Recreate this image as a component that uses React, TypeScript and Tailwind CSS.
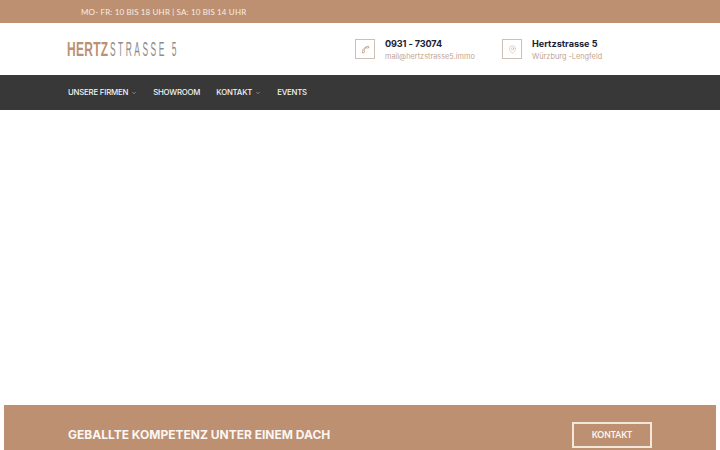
import { ChevronDown, MapPin } from 'lucide-react'

const poppins = "font-['Inter','Noto_Sans',sans-serif]"

function NavItem({ label, caret }: { label: string; caret?: boolean }) {
  return (
    <a className="flex items-center gap-[3px] text-[7.8px] font-medium tracking-[-0.2px] text-[#f4f4f4]">
      {label}
      {caret && <ChevronDown size={6} strokeWidth={1.5} className="mt-px" />}
    </a>
  )
}

function InfoBox({
  icon,
  title,
  sub,
  className,
  titleClass,
}: {
  icon: React.ReactNode
  title: string
  sub: string
  className?: string
  titleClass?: string
}) {
  return (
    <div className={`flex items-center gap-[10px] ${className ?? ''}`}>
      <div className="flex h-[20px] w-[20px] items-center justify-center border border-[#cfbfb2] text-[#bf9172]">
        {icon}
      </div>
      <div className="flex flex-col">
        <span className={`text-[9.1px] leading-[14px] font-bold text-[#1b2233] ${titleClass ?? ''}`}>{title}</span>
        <span className="text-[7.35px] leading-[11px] text-[#c2a48f]">{sub}</span>
      </div>
    </div>
  )
}

export default function App() {
  return (
    <div className={`flex h-[450px] w-[720px] flex-col overflow-hidden bg-white ${poppins}`}>
      <div className="flex h-[23px] items-center bg-[#bd9071] pl-[81px] font-['Lato',sans-serif] text-[8px] tracking-[0.15px] text-[#f7ede6]">
        MO- FR: 10 BIS 18 UHR | SA: 10 BIS 14 UHR
      </div>

      <header className="flex h-[52px] items-center pl-[67px]">
        <div className="flex w-[288px] items-center font-['Liberation_Sans',sans-serif] text-[20px] leading-none">
          <span className="inline-block w-[43px] shrink-0 origin-left scale-x-[0.6] font-bold tracking-[0.5px] text-[#bd9071]">
            HERTZ
          </span>
          <span className="inline-block shrink-0 origin-left scale-x-[0.42] tracking-[6px] whitespace-nowrap text-[#8c8c8c]">
            STRASSE 5
          </span>
        </div>
        <InfoBox
          className="w-[147px]"
          titleClass="tracking-[-0.1px]"
          icon={
            <svg width="9" height="9" viewBox="0 0 9 9" fill="none" stroke="currentColor" strokeWidth="0.8">
              <path d="M1.5 8 C1 4.5 4 1.5 7.5 1.2 L8 2.4 L6.6 3.2 L6 2.5 C4.4 3 3.2 4.3 2.9 5.8 L3.6 6.2 L2.9 7.8 Z" />
            </svg>
          }
          title="0931 - 73074"
          sub="mail@hertzstrasse5.immo"
        />
        <InfoBox
          icon={<MapPin size={9} strokeWidth={1} />}
          title="Hertzstrasse 5"
          sub="Würzburg -Lengfeld"
        />
      </header>

      <nav className="flex h-[35px] items-center gap-[16px] bg-[#383838] pl-[68px]">
        <NavItem label="UNSERE FIRMEN" caret />
        <NavItem label="SHOWROOM" />
        <NavItem label="KONTAKT" caret />
        <NavItem label="EVENTS" />
      </nav>

      <main className="flex-1" />

      <section className="mx-[4px] flex h-[45px] shrink-0 items-start justify-between bg-[#bd9071] pr-[64px] pl-[64px]">
        <h2 className="mt-[22px] text-[12px] leading-[16px] font-bold text-[#fbf6f2]">
          GEBALLTE KOMPETENZ UNTER EINEM DACH
        </h2>
        <a className="mt-[17px] flex h-[26px] w-[80px] items-center justify-center border-2 border-[#f3e6db] font-['Lato',sans-serif] text-[8.5px] font-bold text-[#fbf6f2]">
          KONTAKT
        </a>
      </section>
    </div>
  )
}
